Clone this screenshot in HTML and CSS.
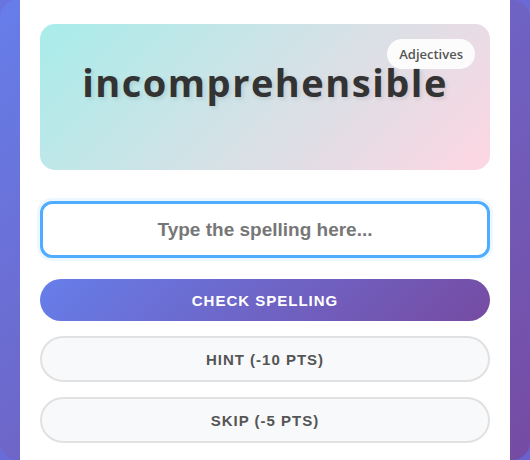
FILE: index.html
```html
<!DOCTYPE html>
<html lang="en">
<head>
  <meta charset="UTF-8" />
  <meta name="viewport" content="width=device-width, initial-scale=1.0" />
  <title>Spelling Bee</title>
  <link rel="stylesheet" href="styles.css">
</head>
<body>
  <div class="spell-frame">
    <div class="spell-card">

      <!-- Word display -->
      <div class="spell-word-box">
        <span class="spell-category">Adjectives</span>
        <div class="spell-word" id="spell-word">incomprehensible</div>
        <div class="spell-hint" id="spell-hint"></div>
      </div>

      <!-- Answer input -->
      <input type="text" class="spell-input" id="spell-input" placeholder="Type the spelling here..." autofocus />

      <!-- Actions -->
      <button class="spell-btn spell-btn-primary">Check Spelling</button>
      <button class="spell-btn spell-btn-secondary">Hint (-10 pts)</button>
      <button class="spell-btn spell-btn-secondary">Skip (-5 pts)</button>

    </div>
  </div>
</body>
</html>
```

FILE: styles.css
```css
/* Base Styles */
body {
  margin: 0;
  padding: 0;
  background: linear-gradient(135deg, #6a74e0 0%, #6a62cc 100%);
  font-family: "Liberation Sans", Arial, sans-serif;
  overflow: hidden;
}

.spell-frame {
  height: 460px;
  border-radius: 18px;
  background: linear-gradient(135deg, #667eea 0%, #764ba2 100%);
  padding: 0 20px;
  overflow: hidden;
}

.spell-card {
  background: #ffffff;
  height: 100%;
  padding: 24px 20px 0;
  box-sizing: border-box;
}

.spell-word-box {
  position: relative;
  background: linear-gradient(135deg, #a8edea 0%, #fed6e3 100%);
  border-radius: 15px;
  height: 146px;
  padding-top: 32px;
  box-sizing: border-box;
  text-align: center;
  margin-bottom: 31px;
}

.spell-category {
  position: absolute;
  top: 15px;
  right: 15px;
  height: 30px;
  line-height: 30px;
  padding: 0 12px;
  border-radius: 15px;
  background: rgba(255, 255, 255, 0.9);
  color: #555;
  font-family: "Open Sans", sans-serif;
  font-size: 13px;
  font-weight: 600;
}

.spell-word {
  font-family: "Open Sans", sans-serif;
  font-size: 38px;
  font-weight: 700;
  letter-spacing: 1.5px;
  color: #333333;
  line-height: 52px;
  text-shadow: 2px 2px 4px rgba(0, 0, 0, 0.1);
}

.spell-hint {
  min-height: 20px;
}

.spell-input {
  display: block;
  width: 100%;
  height: 57px;
  box-sizing: border-box;
  border: 3px solid #4facfe;
  border-radius: 12px;
  box-shadow: 0 0 0 3px rgba(79, 172, 254, 0.1);
  outline: none;
  text-align: center;
  font-family: "Liberation Sans", Arial, sans-serif;
  font-size: 19px;
  font-weight: 700;
  color: #333;
  margin-bottom: 21px;
  caret-color: #000;
}

.spell-input::placeholder {
  color: #777777;
}

.spell-btn {
  display: block;
  width: 100%;
  box-sizing: border-box;
  border-radius: 25px;
  font-family: "Liberation Sans", Arial, sans-serif;
  font-size: 15px;
  font-weight: 700;
  text-transform: uppercase;
  letter-spacing: 1px;
  cursor: pointer;
  margin-bottom: 15px;
}

.spell-btn-primary {
  height: 42px;
  border: none;
  color: #ffffff;
  background: linear-gradient(135deg, #667eea 0%, #764ba2 100%);
}

.spell-btn-secondary {
  height: 46px;
  border: 2px solid #e1e1e1;
  color: #555555;
  background: #f8f9fa;
}
```
